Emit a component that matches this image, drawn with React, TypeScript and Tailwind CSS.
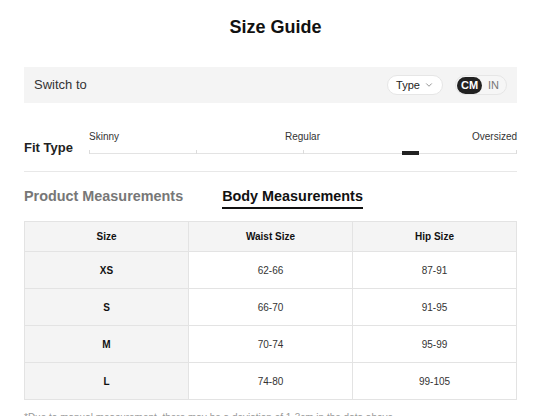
import { ChevronDown } from 'lucide-react';

const rows = [
  { size: 'XS', waist: '62-66', hip: '87-91' },
  { size: 'S', waist: '66-70', hip: '91-95' },
  { size: 'M', waist: '70-74', hip: '95-99' },
  { size: 'L', waist: '74-80', hip: '99-105' },
];

const ticks = [0, 25, 50, 100];

const App = () => {
  return <div className="min-h-screen bg-white font-['Liberation_Sans',Arial,sans-serif] text-[#222]">
      <div className="h-[54px] flex items-center justify-center">
        <h1 className="text-[18px] font-bold leading-[20px] text-[#111] pl-[14px]">Size Guide</h1>
      </div>

      <div className="pl-6 pr-5">
        {/* Switch bar */}
        <div className="mt-[13px] h-[36px] bg-[#f4f4f4] flex items-center justify-between pl-[10px] pr-[10px]">
          <span className="text-[13px] text-[#333]">Switch to</span>
          <div className="flex items-center gap-[12px]">
            <button className="h-[20px] w-[56px] rounded-full bg-white border border-[#e6e6e6] flex items-center justify-center gap-[4px] text-[11px] text-[#222]">
              Type
              <ChevronDown size={10} strokeWidth={1.5} className="text-[#555]" />
            </button>
            <div className="h-[20px] w-[52px] rounded-full border border-[#e6e6e6] bg-[#f6f6f6] flex items-center p-[1px]">
              <span className="h-[17px] w-[25px] rounded-full bg-[#222] text-white text-[11px] font-bold flex items-center justify-center">CM</span>
              <span className="flex-1 text-center text-[11px] text-[#777]">IN</span>
            </div>
          </div>
        </div>

        {/* Fit type */}
        <div className="pt-[28px] flex items-end">
          <div className="w-[65px] text-[13px] font-bold leading-[16px] text-[#222]">Fit Type</div>
          <div className="flex-1">
            <div className="flex justify-between text-[10px] leading-[12px] text-[#333]">
              <span>Skinny</span>
              <span className="pl-[14px]">Regular</span>
              <span>Oversized</span>
            </div>
            <div className="relative h-[13px]">
              <div className="absolute left-0 right-0 top-[10px] h-px bg-[#e3e3e3]" />
              {ticks.map(t => <div key={t} className="absolute top-[7px] w-px h-[4px] bg-[#dcdcdc]" style={{
              left: `calc(${t}% - ${t === 100 ? 1 : 0}px)`
            }} />)}
              <div className="absolute top-[8px] left-[313px] w-[17px] h-[4px] bg-[#222]" />
            </div>
          </div>
        </div>

        <div className="mt-[15px] border-t border-[#e8e8e8]" />

        {/* Tabs */}
        <div className="mt-[16px] flex gap-[39px] text-[14.4px] font-bold leading-[17px]">
          <span className="text-[#777] pb-[2px]">Product Measurements</span>
          <span className="text-[#111] pb-[2px] border-b-2 border-[#111]">Body Measurements</span>
        </div>

        {/* Table */}
        <table className="mt-[12px] w-full table-fixed border-collapse text-[10px] text-center">
          <thead>
            <tr className="h-[30px] bg-[#f4f4f4]">
              <th className="border border-[#e3e3e3] font-bold text-[#111]">Size</th>
              <th className="border border-[#e3e3e3] font-bold text-[#111]">Waist Size</th>
              <th className="border border-[#e3e3e3] font-bold text-[#111]">Hip Size</th>
            </tr>
          </thead>
          <tbody>
            {rows.map(r => <tr key={r.size} className="h-[37px]">
                <td className="border border-[#e3e3e3] bg-[#f4f4f4] font-bold text-[#111]">{r.size}</td>
                <td className="border border-[#e3e3e3] text-[#333]">{r.waist}</td>
                <td className="border border-[#e3e3e3] text-[#333]">{r.hip}</td>
              </tr>)}
          </tbody>
        </table>

        <p className="mt-[12px] text-[10px] leading-[12px] text-[#999]">
          *Due to manual measurement, there may be a deviation of 1-3cm in the data above.
        </p>
      </div>
    </div>;
};

export default App;
